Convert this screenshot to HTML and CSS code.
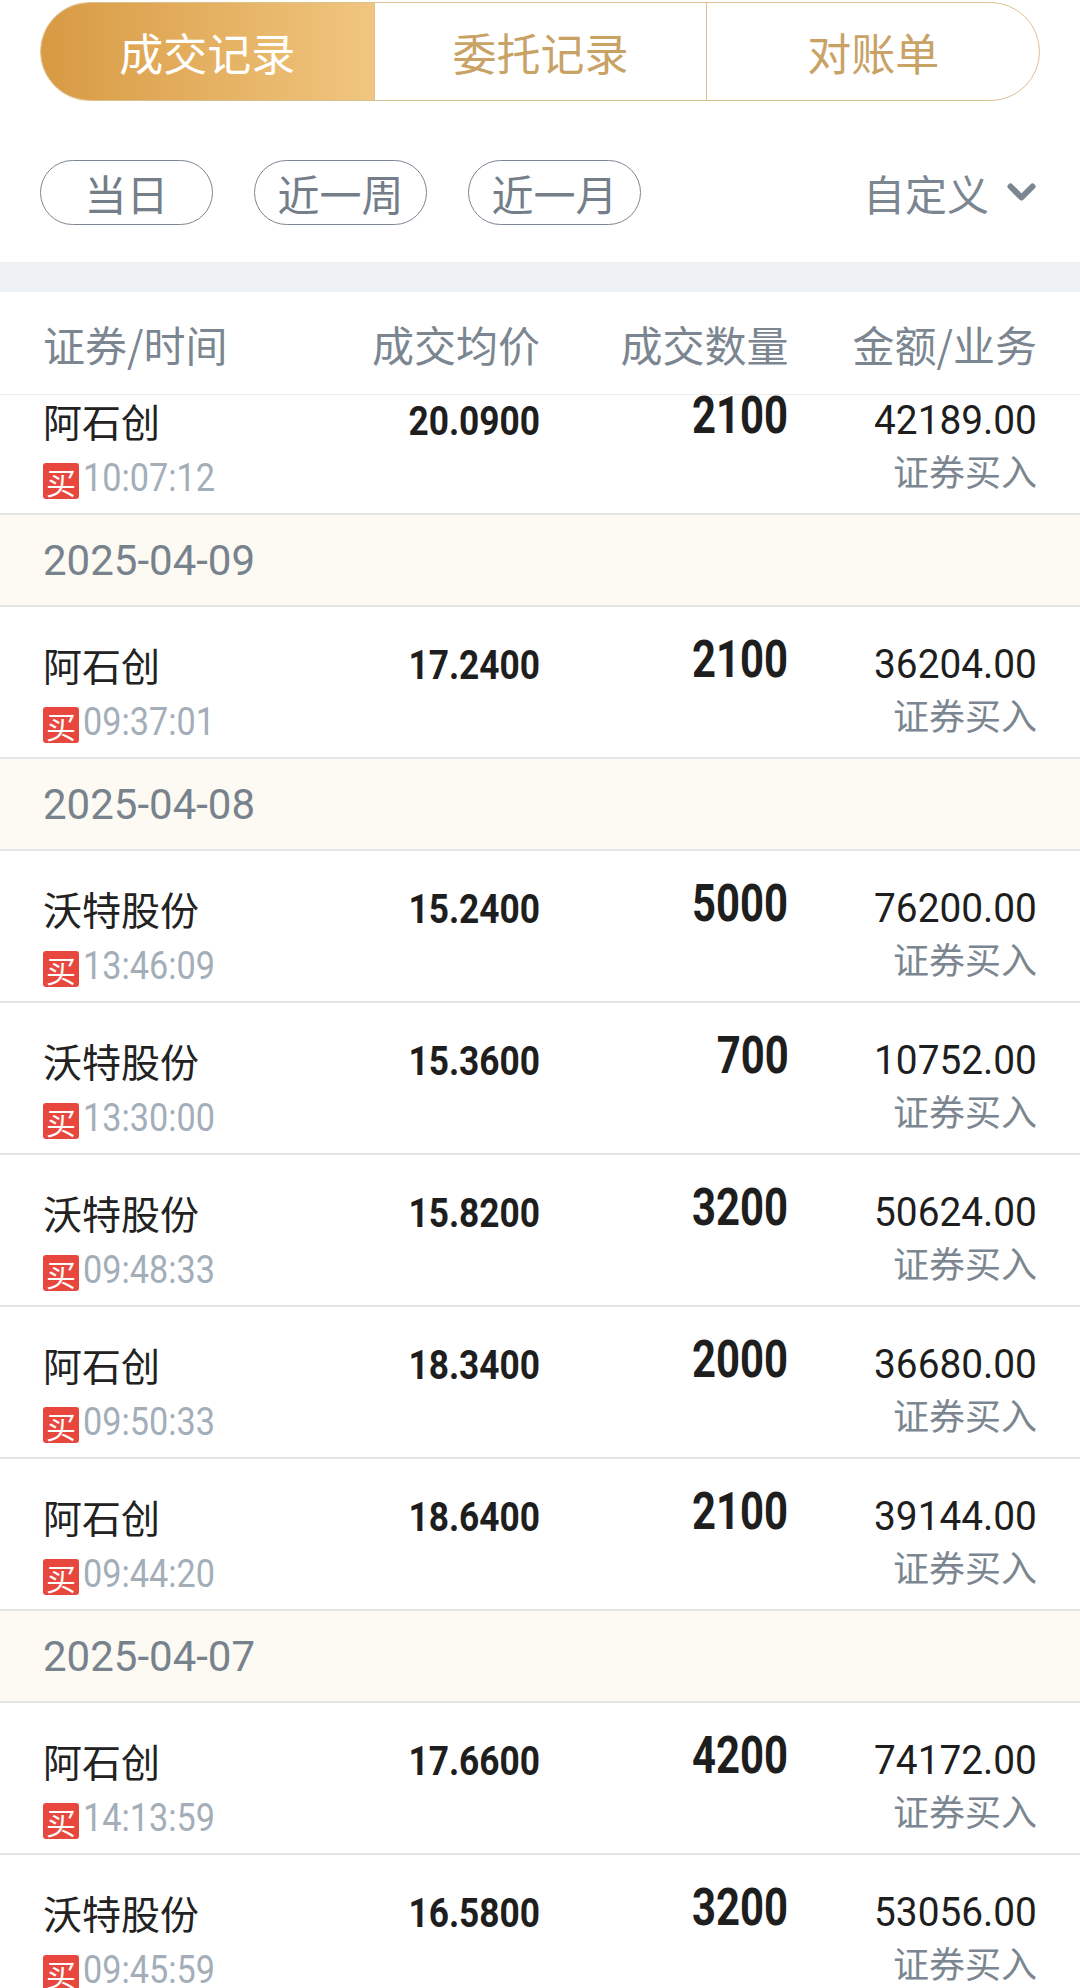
FILE: index.html
```html
<!DOCTYPE html>
<html lang="zh-CN">
<head>
<meta charset="utf-8">
<title>成交记录</title>
<link rel="stylesheet" href="styles.css">
</head>
<body>
<div class="page">
  <div class="tabs">
    <div class="tab active">成交记录</div>
    <div class="tab">委托记录</div>
    <div class="tab">对账单</div>
  </div>

  <div class="filters">
    <div class="pill">当日</div>
    <div class="pill">近一周</div>
    <div class="pill">近一月</div>
    <div class="custom">自定义<svg class="chev" width="29" height="19" viewBox="0 0 29 19"><path d="M3.5 3.5 L14.5 14.5 L25.5 3.5" fill="none" stroke="#7b8691" stroke-width="6" stroke-linecap="round" stroke-linejoin="round"/></svg></div>
  </div>

  <div class="band"></div>

  <div class="thead">
    <div class="th first">证券/时间</div>
    <div class="th">成交均价</div>
    <div class="th">成交数量</div>
    <div class="th">金额/业务</div>
  </div>

  <div class="list">
    <div class="row partial">
      <div class="name">阿石创</div>
      <div class="num price">20.0900</div>
      <div class="num qty">2100</div>
      <div class="num amount">42189.00</div>
      <div class="when"><span class="badge">买</span><span class="time">10:07:12</span></div>
      <div class="biz">证券买入</div>
    </div>
    <div class="date">2025-04-09</div>
    <div class="row">
      <div class="name">阿石创</div>
      <div class="num price">17.2400</div>
      <div class="num qty">2100</div>
      <div class="num amount">36204.00</div>
      <div class="when"><span class="badge">买</span><span class="time">09:37:01</span></div>
      <div class="biz">证券买入</div>
    </div>
    <div class="date">2025-04-08</div>
    <div class="row">
      <div class="name">沃特股份</div>
      <div class="num price">15.2400</div>
      <div class="num qty">5000</div>
      <div class="num amount">76200.00</div>
      <div class="when"><span class="badge">买</span><span class="time">13:46:09</span></div>
      <div class="biz">证券买入</div>
    </div>
    <div class="row">
      <div class="name">沃特股份</div>
      <div class="num price">15.3600</div>
      <div class="num qty">700</div>
      <div class="num amount">10752.00</div>
      <div class="when"><span class="badge">买</span><span class="time">13:30:00</span></div>
      <div class="biz">证券买入</div>
    </div>
    <div class="row">
      <div class="name">沃特股份</div>
      <div class="num price">15.8200</div>
      <div class="num qty">3200</div>
      <div class="num amount">50624.00</div>
      <div class="when"><span class="badge">买</span><span class="time">09:48:33</span></div>
      <div class="biz">证券买入</div>
    </div>
    <div class="row">
      <div class="name">阿石创</div>
      <div class="num price">18.3400</div>
      <div class="num qty">2000</div>
      <div class="num amount">36680.00</div>
      <div class="when"><span class="badge">买</span><span class="time">09:50:33</span></div>
      <div class="biz">证券买入</div>
    </div>
    <div class="row">
      <div class="name">阿石创</div>
      <div class="num price">18.6400</div>
      <div class="num qty">2100</div>
      <div class="num amount">39144.00</div>
      <div class="when"><span class="badge">买</span><span class="time">09:44:20</span></div>
      <div class="biz">证券买入</div>
    </div>
    <div class="date">2025-04-07</div>
    <div class="row">
      <div class="name">阿石创</div>
      <div class="num price">17.6600</div>
      <div class="num qty">4200</div>
      <div class="num amount">74172.00</div>
      <div class="when"><span class="badge">买</span><span class="time">14:13:59</span></div>
      <div class="biz">证券买入</div>
    </div>
    <div class="row">
      <div class="name">沃特股份</div>
      <div class="num price">16.5800</div>
      <div class="num qty">3200</div>
      <div class="num amount">53056.00</div>
      <div class="when"><span class="badge">买</span><span class="time">09:45:59</span></div>
      <div class="biz">证券买入</div>
    </div>
  </div>
</div>
</body>
</html>
```

FILE: styles.css
```css
* {
  box-sizing: border-box;
  margin: 0;
  padding: 0;
}

html, body {
  background: #fff;
}

body {
  width: 1080px;
  height: 1988px;
  overflow: hidden;
  font-family: "Noto Sans CJK SC", "Noto Sans", sans-serif;
  color: #222;
}

.page {
  display: flex;
  flex-direction: column;
  height: 1988px;
}

/* top segmented tabs */
.tabs {
  margin: 2px 40px 0;
  height: 99px;
  border: 1.5px solid #dcc190;
  border-radius: 50px;
  overflow: hidden;
  display: grid;
  grid-template-columns: repeat(3, 1fr);
  flex: none;
}

.tab {
  display: flex;
  align-items: center;
  justify-content: center;
  font-size: 44px;
  color: #c9a266;
}

.tab + .tab {
  border-left: 1.5px solid #dcc190;
}

.tab.active {
  background: linear-gradient(90deg, #d89a43, #f0c67f);
  color: #fff;
}

/* period filters */
.filters {
  display: flex;
  align-items: center;
  margin-top: 58px;
  padding: 0 44px 0 40px;
  height: 66px;
  flex: none;
}

.pill {
  width: 173px;
  height: 65px;
  border: 1px solid #7d8792;
  border-radius: 33px;
  display: flex;
  align-items: center;
  justify-content: center;
  font-size: 42px;
  color: #737e89;
  margin-right: 41px;
}

.custom {
  margin-left: auto;
  display: flex;
  align-items: center;
  font-size: 42px;
  color: #7b8691;
}

.chev {
  margin-left: 18px;
}

.band {
  margin-top: 37px;
  height: 30px;
  background: #eef1f4;
  flex: none;
}

/* table header */
.thead {
  height: 103px;
  border-bottom: 1px solid #ececec;
  display: grid;
  grid-template-columns: repeat(4, 1fr);
  align-items: center;
  padding: 0 43px;
  flex: none;
}

.th {
  justify-self: end;
  font-size: 42px;
  color: #7b8691;
}

.th.first {
  justify-self: start;
}

/* list */
.list {
  flex: 1;
}

.row {
  height: 152px;
  border-bottom: 2px solid #e5e5e5;
  display: grid;
  grid-template-columns: repeat(4, 1fr);
  grid-template-rows: 44px 44px;
  row-gap: 13px;
  padding: 36px 43px 0;
  align-items: center;
}

/* first row is scrolled partly under the header */
.row.partial {
  height: 120px;
  padding-top: 4px;
}

.name {
  grid-column: 1;
  grid-row: 1;
  font-size: 39px;
  line-height: 44px;
  color: #222;
  margin-top: -2px;
}

.num {
  justify-self: end;
  font-family: Roboto, "Noto Sans", sans-serif;
  color: #1e1e1e;
  transform-origin: right center;
}

.price {
  grid-column: 2;
  grid-row: 1;
  font-weight: 700;
  font-size: 41px;
  line-height: 44px;
  transform: scaleX(0.86);
}

.qty {
  grid-column: 3;
  grid-row: 1;
  align-self: start;
  font-weight: 700;
  font-size: 51px;
  line-height: 34px;
  transform: scaleX(0.82);
}

.amount {
  grid-column: 4;
  grid-row: 1;
  font-size: 40px;
  line-height: 44px;
  transform: scaleX(0.97);
}

.when {
  grid-column: 1;
  grid-row: 2;
  display: flex;
  align-items: center;
}

.badge {
  width: 36px;
  height: 36px;
  margin-top: 5px;
  background: #e8473d;
  color: #fff;
  border-radius: 3px;
  font-size: 30px;
  line-height: 36px;
  text-align: center;
}

.time {
  margin-left: 4px;
  font-family: Roboto, "Noto Sans", sans-serif;
  font-size: 38px;
  color: #a3aeb9;
  transform: scaleX(0.9);
  transform-origin: left center;
}

.biz {
  grid-column: 4;
  grid-row: 2;
  justify-self: end;
  align-self: start;
  font-size: 36px;
  line-height: 36px;
  margin-top: -4px;
  color: #7b8691;
}

.date {
  height: 92px;
  background: #fcfaf3;
  border-bottom: 2px solid #e5e5e5;
  display: flex;
  align-items: center;
  padding-left: 43px;
  font-family: Roboto, "Noto Sans", sans-serif;
  font-size: 42px;
  color: #77828d;
}
```
